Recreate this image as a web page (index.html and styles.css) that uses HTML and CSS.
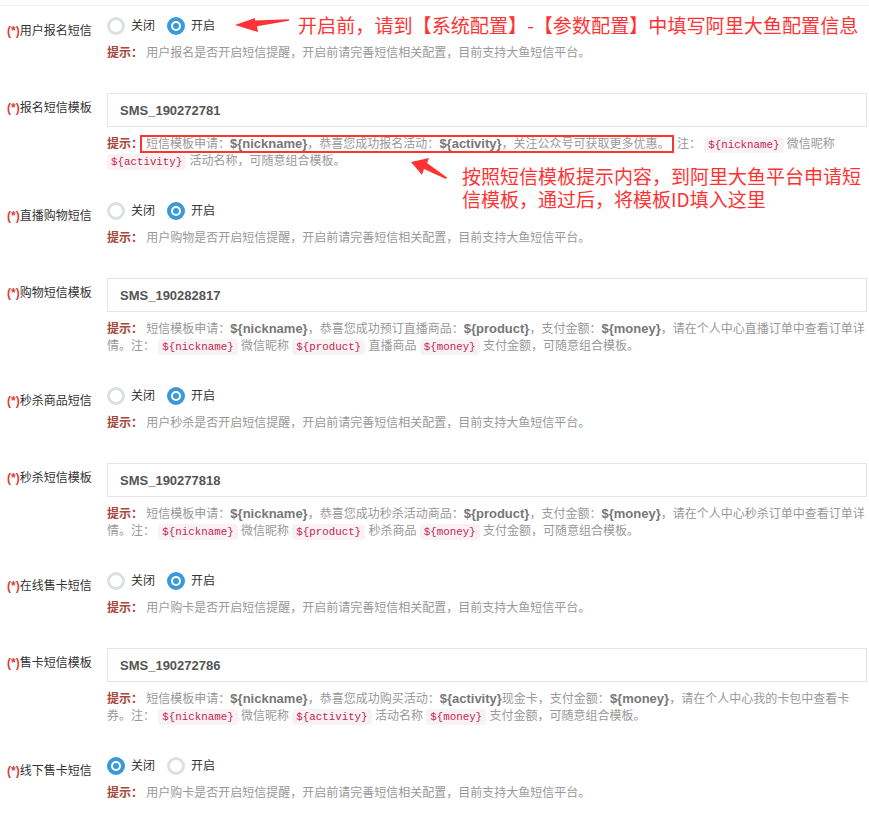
FILE: index.html
```html
<!DOCTYPE html>
<html lang="zh-CN">

<head>
    <meta charset="UTF-8">
    <meta name="viewport" content="width=device-width, initial-scale=1.0">
    <title>短信配置</title>
    <link rel="stylesheet" href="styles.css">
</head>

<body>
    <div class="page">
        <div class="form">

            <div class="group group-switch">
                <label class="field-label"><b class="req">(*)</b>用户报名短信</label>
                <div class="field-body">
                    <div class="radios">
                        <span class="radio"><i class="radio-dot"></i>关闭</span>
                        <span class="radio checked"><i class="radio-dot"></i>开启</span>
                    </div>
                    <p class="hint"><strong>提示：</strong> 用户报名是否开启短信提醒，开启前请完善短信相关配置，目前支持大鱼短信平台。</p>
                </div>
            </div>

            <div class="group group-text">
                <label class="field-label"><b class="req">(*)</b>报名短信模板</label>
                <div class="field-body">
                    <input class="input" type="text" value="SMS_190272781">
                    <p class="hint"><strong>提示：</strong><span class="mark">短信模板申请：<b>${nickname}</b>，恭喜您成功报名活动：<b>${activity}</b>，关注公众号可获取更多优惠。</span> 注： <code>${nickname}</code> 微信昵称 <code>${activity}</code> 活动名称，可随意组合模板。</p>
                </div>
            </div>

            <div class="group group-switch">
                <label class="field-label"><b class="req">(*)</b>直播购物短信</label>
                <div class="field-body">
                    <div class="radios">
                        <span class="radio"><i class="radio-dot"></i>关闭</span>
                        <span class="radio checked"><i class="radio-dot"></i>开启</span>
                    </div>
                    <p class="hint"><strong>提示：</strong> 用户购物是否开启短信提醒，开启前请完善短信相关配置，目前支持大鱼短信平台。</p>
                </div>
            </div>

            <div class="group group-text">
                <label class="field-label"><b class="req">(*)</b>购物短信模板</label>
                <div class="field-body">
                    <input class="input" type="text" value="SMS_190282817">
                    <p class="hint"><strong>提示：</strong> 短信模板申请：<b>${nickname}</b>，恭喜您成功预订直播商品：<b>${product}</b>，支付金额：<b>${money}</b>，请在个人中心直播订单中查看订单详情。注： <code>${nickname}</code> 微信昵称 <code>${product}</code> 直播商品 <code>${money}</code> 支付金额，可随意组合模板。</p>
                </div>
            </div>

            <div class="group group-switch">
                <label class="field-label"><b class="req">(*)</b>秒杀商品短信</label>
                <div class="field-body">
                    <div class="radios">
                        <span class="radio"><i class="radio-dot"></i>关闭</span>
                        <span class="radio checked"><i class="radio-dot"></i>开启</span>
                    </div>
                    <p class="hint"><strong>提示：</strong> 用户秒杀是否开启短信提醒，开启前请完善短信相关配置，目前支持大鱼短信平台。</p>
                </div>
            </div>

            <div class="group group-text">
                <label class="field-label"><b class="req">(*)</b>秒杀短信模板</label>
                <div class="field-body">
                    <input class="input" type="text" value="SMS_190277818">
                    <p class="hint"><strong>提示：</strong> 短信模板申请：<b>${nickname}</b>，恭喜您成功秒杀活动商品：<b>${product}</b>，支付金额：<b>${money}</b>，请在个人中心秒杀订单中查看订单详情。注： <code>${nickname}</code> 微信昵称 <code>${product}</code> 秒杀商品 <code>${money}</code> 支付金额，可随意组合模板。</p>
                </div>
            </div>

            <div class="group group-switch">
                <label class="field-label"><b class="req">(*)</b>在线售卡短信</label>
                <div class="field-body">
                    <div class="radios">
                        <span class="radio"><i class="radio-dot"></i>关闭</span>
                        <span class="radio checked"><i class="radio-dot"></i>开启</span>
                    </div>
                    <p class="hint"><strong>提示：</strong> 用户购卡是否开启短信提醒，开启前请完善短信相关配置，目前支持大鱼短信平台。</p>
                </div>
            </div>

            <div class="group group-text">
                <label class="field-label"><b class="req">(*)</b>售卡短信模板</label>
                <div class="field-body">
                    <input class="input" type="text" value="SMS_190272786">
                    <p class="hint"><strong>提示：</strong> 短信模板申请：<b>${nickname}</b>，恭喜您成功购买活动：<b>${activity}</b>现金卡，支付金额：<b>${money}</b>，请在个人中心我的卡包中查看卡券。注： <code>${nickname}</code> 微信昵称 <code>${activity}</code> 活动名称 <code>${money}</code> 支付金额，可随意组合模板。</p>
                </div>
            </div>

            <div class="group group-switch">
                <label class="field-label"><b class="req">(*)</b>线下售卡短信</label>
                <div class="field-body">
                    <div class="radios">
                        <span class="radio checked"><i class="radio-dot"></i>关闭</span>
                        <span class="radio"><i class="radio-dot"></i>开启</span>
                    </div>
                    <p class="hint"><strong>提示：</strong> 用户购卡是否开启短信提醒，开启前请完善短信相关配置，目前支持大鱼短信平台。</p>
                </div>
            </div>

        </div>

        <!-- annotations drawn over the form -->
        <svg class="marks" width="869" height="816" viewBox="0 0 869 816">
            <polygon fill="#ff3333" points="235,25 255,18 255,20.5 289,19.3 289,20.7 257,26.2 258,32" />
            <polygon fill="#ff3333" points="411,162 429,158 427,163 447,177.5 446,179 424,169 422,175" />
        </svg>
        <p class="note note-top">开启前，请到【系统配置】-【参数配置】中填写阿里大鱼配置信息</p>
        <p class="note note-side">按照短信模板提示内容，到阿里大鱼平台申请短<br>信模板，通过后，将模板ID填入这里</p>
    </div>
</body>

</html>
```

FILE: styles.css
```css
* {
    margin: 0;
    padding: 0;
    box-sizing: border-box;
}

body {
    font-family: "Liberation Sans", "Noto Sans CJK SC", sans-serif;
    font-size: 12px;
    color: #333;
    background-color: #fff;
}

.page {
    position: relative;
    width: 869px;
    padding-top: 5px;
}

.form {
    border-top: 1px solid #eee;
    padding-top: 1px;
}

.group {
    display: flex;
}

.group-switch {
    padding-top: 10px;
    margin-bottom: 31px;
}

.group-text {
    margin-bottom: 22px;
}

.field-label {
    width: 107px;
    flex-shrink: 0;
    padding-left: 7px;
    line-height: 17px;
    color: #333;
}

.group-switch .field-label {
    padding-top: 6px;
}

.group-text .field-label {
    padding-top: 7px;
}

.req {
    color: #d43f3a;
}

.field-body {
    width: 760px;
}

/* Radios */
.radios {
    display: flex;
    align-items: center;
    height: 18px;
}

.radio {
    display: flex;
    align-items: center;
    margin-right: 12px;
    line-height: 18px;
}

.radio-dot {
    position: relative;
    width: 18px;
    height: 18px;
    margin-right: 6px;
    border: 3px solid #dce0e3;
    border-radius: 50%;
}

.radio.checked .radio-dot {
    border: 4px solid #3a99d8;
}

.radio.checked .radio-dot::after {
    content: "";
    position: absolute;
    left: 50%;
    top: 50%;
    width: 6px;
    height: 6px;
    margin: -3px 0 0 -3px;
    border-radius: 50%;
    background-color: #3a99d8;
}

/* Text inputs */
.input {
    display: block;
    width: 100%;
    height: 34px;
    padding: 0 12px;
    border: 1px solid #e5e5e5;
    outline: none;
    font-family: "Liberation Sans", sans-serif;
    font-size: 13px;
    font-weight: bold;
    color: #555;
    background-color: #fff;
}

/* Hints */
.hint {
    margin-top: 10px;
    line-height: 17px;
    color: #999;
}

.group-text .hint {
    margin-top: 9px;
}

.hint strong {
    color: #a6473b;
}

.hint b {
    font-size: 13px;
    line-height: 1;
    color: #777;
}

.hint code {
    font-family: "Liberation Mono", monospace;
    font-size: 10.8px;
    line-height: 1;
    padding: 2px 4px;
    border-radius: 4px;
    color: #c7254e;
    background-color: #f9f2f4;
}

.mark {
    margin-left: -3px;
    padding: 0 2px 0 4px;
    border: 2px solid #ff3333;
}

/* Annotations */
.marks {
    position: absolute;
    left: 0;
    top: 0;
    pointer-events: none;
}

.note {
    position: absolute;
    font-family: "Noto Sans CJK SC", sans-serif;
    font-size: 19.1px;
    line-height: 23px;
    color: #ff3333;
    white-space: nowrap;
}

.note-top {
    left: 298px;
    top: 14px;
}

.note-side {
    left: 462px;
    top: 164px;
    font-size: 19px;
}
```
